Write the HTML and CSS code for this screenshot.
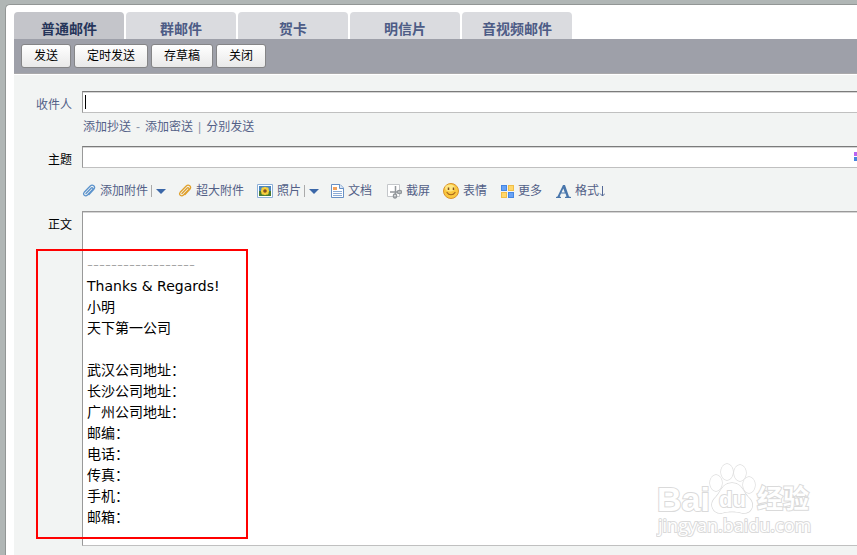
FILE: index.html
```html
<!DOCTYPE html>
<html lang="zh-CN">
<head>
<meta charset="utf-8">
<title>写信</title>
<link rel="stylesheet" href="styles.css">
</head>
<body>
<main class="window">
  <nav class="tabs">
    <a class="tab active" href="#">普通邮件</a>
    <a class="tab" href="#">群邮件</a>
    <a class="tab" href="#">贺卡</a>
    <a class="tab" href="#">明信片</a>
    <a class="tab" href="#">音视频邮件</a>
  </nav>
  <div class="actions">
    <button type="button">发送</button>
    <button type="button">定时发送</button>
    <button type="button">存草稿</button>
    <button type="button">关闭</button>
  </div>
  <form class="compose">
    <label class="label soft" for="to">收件人</label>
    <div class="field">
      <input id="to" type="text">
      <span class="caret"></span>
    </div>
    <div class="links">
      <a href="#">添加抄送</a><span class="sep">-</span><a href="#">添加密送</a><span class="sep">|</span><a href="#">分别发送</a>
    </div>
    <label class="label" for="subject">主题</label>
    <div class="field">
      <input id="subject" type="text">
      <span class="swatches"><i></i><i></i></span>
    </div>
    <div class="tools">
      <a class="tool attach" href="#"><svg width="14" height="14" viewBox="0 0 14 14" fill="none" stroke="#5c93cc" stroke-width="1.3" stroke-linecap="round"><path d="M4 9.5 9 4.2c1.2-1.2 2.6.1 1.5 1.4L5.5 11C3.4 13.1.2 10.7 2.2 8.3L8 2.2C10.7-.3 14 2.6 11.8 5.3L7 10.5"/></svg>添加附件</a>
      <button class="drop" type="button" aria-label="附件选项"></button>
      <a class="tool big" href="#"><svg width="14" height="14" viewBox="0 0 14 14" fill="none" stroke="#e0a02c" stroke-width="1.3" stroke-linecap="round"><path d="M4 9.5 9 4.2c1.2-1.2 2.6.1 1.5 1.4L5.5 11C3.4 13.1.2 10.7 2.2 8.3L8 2.2C10.7-.3 14 2.6 11.8 5.3L7 10.5"/></svg>超大附件</a>
      <a class="tool photo" href="#"><svg width="16" height="14" viewBox="0 0 16 14"><path fill="#fff" stroke="#8db0d8" d="M.5.5h15v13H.5z"/><path fill="#4b86bd" d="M2 2h12v5H2z"/><path fill="#477b35" d="M2 7h12v5H2z"/><g fill="#f5cf3c"><circle cx="8" cy="4.500" r="1.700"/><circle cx="8" cy="9.500" r="1.700"/><circle cx="5.500" cy="7" r="1.700"/><circle cx="10.500" cy="7" r="1.700"/><circle cx="6" cy="5" r="1.700"/><circle cx="10" cy="5" r="1.700"/><circle cx="6" cy="9" r="1.700"/><circle cx="10" cy="9" r="1.700"/></g><circle cx="8" cy="7" r="1.800" fill="#87501e"/></svg>照片</a>
      <button class="drop" type="button" aria-label="照片选项"></button>
      <a class="tool doc" href="#"><svg width="13" height="14" viewBox="0 0 13 14"><path fill="#fff" stroke="#6790c5" d="M.5.5H9L12.5 4v9.500H.5z"/><path fill="#dbe7f7" stroke="#6790c5" d="M8.500.5v4h4"/><path fill="#f3a25d" d="M2 3h4v3H2z"/><path stroke="#8babd5" d="M2 7.500h9M2 9.500h9M2 11.500h9"/></svg>文档</a>
      <a class="tool shot" href="#"><svg width="15" height="15" viewBox="0 0 15 15" fill="none"><path fill="#fff" stroke="#c4c7ca" d="M.5.5h12v12H.5z"/><g stroke="#92979b" stroke-width="1.5"><path d="M8.500 2v8M3 8h8"/><ellipse cx="8" cy="12" rx="1.500" ry="2"/><ellipse cx="12.500" cy="8" rx="2" ry="1.500"/></g></svg>截屏</a>
      <a class="tool face" href="#"><svg width="16" height="16" viewBox="0 0 16 16"><circle cx="8" cy="8" r="7.500" fill="#fac83e" stroke="#d9922c"/><ellipse cx="7" cy="5" rx="5" ry="3.500" fill="#ffe681"/><path stroke="#825020" stroke-width="1.5" d="M5.500 4.500V7M10.500 4.500V7"/><path fill="none" stroke="#a4621d" stroke-width="1.2" stroke-linecap="round" d="M4 9.500c2 3 6 3 8 0"/></svg>表情</a>
      <a class="tool more" href="#"><svg width="13" height="13" viewBox="0 0 13 13"><rect x=".5" y=".5" width="5" height="5" fill="#68a2f5" stroke="#4586e2"/><rect x="7.500" y=".5" width="5" height="5" fill="#ffd76a" stroke="#f0bd46"/><rect x=".5" y="7.500" width="5" height="5" fill="#ffd76a" stroke="#f0bd46"/><rect x="7.500" y="7.500" width="5" height="5" fill="#68a2f5" stroke="#4586e2"/></svg>更多</a>
      <a class="tool format" href="#"><svg width="15" height="13" viewBox="0 0 15 13"><path fill="#4976ab" fill-rule="evenodd" d="M7 0h2l4 11.500 2 .5v1H9v-1l1.500-.5-1-3H5l-1.300 3L5 12v1H0v-1l1.500-.5zM7.300 3.500 5.500 7.500h3.300z"/></svg><span>格式<svg width="6" height="11" viewBox="0 0 6 11" fill="none" stroke="#536896"><path d="M3.500 0v10M1 7.500l2.500 2.500L6 7.500"/></svg></span></a>
    </div>
    <div class="label" id="body-label">正文</div>
    <div class="editor" contenteditable="true" role="textbox" aria-multiline="true" aria-labelledby="body-label" spellcheck="false">
      <p class="rule">––––––––––––––––––</p>
      <p>Thanks &amp; Regards!</p>
      <p>小明</p>
      <p>天下第一公司</p>
      <p><br></p>
      <p>武汉公司地址：</p>
      <p>长沙公司地址：</p>
      <p>广州公司地址：</p>
      <p>邮编：</p>
      <p>电话：</p>
      <p>传真：</p>
      <p>手机：</p>
      <p>邮箱：</p>
    </div>
  </form>
  <div class="highlight"></div>
  <svg class="watermark" width="160" height="80" viewBox="0 0 160 80" fill="#fff" stroke="#dadada" stroke-width="2" paint-order="stroke">
    <text class="brand" x="1" y="49">Bai</text>
    <g stroke-width="1.3"><ellipse cx="60" cy="21" rx="6" ry="8"/><ellipse cx="71" cy="10" rx="6" ry="8"/><ellipse cx="84" cy="11" rx="6" ry="8"/><ellipse cx="93" cy="23" rx="6" ry="8"/><path d="M76 21c-10 0-11 9-16 14-8 7-3 17 6 16 7-2 13-2 20 0 10 1 14-9 6-16-5-5-6-14-16-14z"/></g>
    <text class="du" x="63" y="45">du</text>
    <text class="cn" x="101" y="46">经验</text>
    <text class="url" x="2" y="70">jingyan.baidu.com</text>
  </svg>
</main>
</body>
</html>
```
FILE: styles.css
```css
* { box-sizing: border-box; }
body {
  margin: 0;
  padding: 4px 0 0 5px;
  background: #b0b6b5;
  color: #000;
  font: 12px/16px "Liberation Sans", "Noto Sans CJK SC", sans-serif;
  overflow: hidden;
}
a { color: #536087; text-decoration: none; }
.window {
  position: relative;
  min-height: calc(100vh - 4px);
  padding: 7px 0 0 8px;
  border: 1px solid #929695;
  border-width: 1px 0 0 1px;
  border-radius: 5px 0 0 0;
  background: #fff;
}
.tabs { display: flex; gap: 2px; }
.tab {
  width: 110px;
  height: 27px;
  padding-top: 6px;
  border-radius: 4px 4px 0 0;
  background: #dadbdf;
  color: #4d5c86;
  font-size: 14px;
  line-height: 22px;
  font-weight: bold;
  text-align: center;
}
.tab.active { background: #c4c5ca; color: #26355a; }
.actions {
  display: flex;
  gap: 3px;
  padding: 5px 7px;
  border-bottom: 1px solid #aaa9ab;
  background: #9ea0a9;
}
.actions button {
  height: 24px;
  padding: 0 12px;
  border: 1px solid #858587;
  border-radius: 3px;
  background: linear-gradient(#fff, #e9e9e9);
  color: #000;
  font: inherit;
}
.compose {
  display: grid;
  grid-template-columns: 58px minmax(0, 1fr);
  column-gap: 10px;
  margin-top: 1px;
  padding: 16px 0 10px;
  background: #f2f4f3;
}
.label { padding-top: 6px; text-align: right; }
.soft { color: #536087; }
.field { position: relative; }
.field input {
  display: block;
  width: 100%;
  height: 22px;
  padding: 0 4px;
  border: 1px solid #999;
  border-width: 1px 0 1px 1px;
  border-color: #7b7b7b #999 #c0c0c0 #999;
  background: #fff;
  box-shadow: inset 0 1px #d5d5d5;
  font: inherit;
  outline: 0;
}
.caret { position: absolute; left: 3px; top: 4px; width: 1px; height: 14px; background: #000; }
.swatches { position: absolute; right: 0; top: 6px; display: grid; gap: 1px; }
.swatches i { width: 3px; height: 4px; background: #b965f1; }
.swatches i + i { background: #4584df; }
.links { grid-column: 2; display: flex; gap: 5px; margin: 6px 0 11px; padding-left: 1px; }
.sep { color: #8b93a8; }
.tools { grid-column: 2; display: flex; align-items: center; height: 16px; margin: 15px 0 12px; }
.tool { display: flex; align-items: center; gap: 4px; white-space: nowrap; }
.drop {
  width: 14px;
  height: 12px;
  margin: 0 13px 0 3px;
  padding: 0 0 0 4px;
  border: 0;
  border-left: 1px solid #aaa;
  background: none;
}
.drop::before { content: ""; display: block; border: 5px solid transparent; border-top-color: #3b67a8; border-bottom: 0; }
.photo, .face { margin-left: 13px; }
.shot { margin-left: 15px; }
.more, .format { margin-left: 14px; }
.format span { display: flex; align-items: center; }
.editor {
  min-height: 335px;
  padding: 43px 4px 17px;
  border: 1px solid #999;
  border-width: 1px 0 1px 1px;
  border-bottom-color: #c0c0c0;
  background: #fff;
  box-shadow: inset 0 1px #d5d5d5;
  font: 14px/21px "DejaVu Sans", "Noto Sans CJK SC", sans-serif;
  outline: 0;
}
.editor p { margin: 0; height: 21px; }
.editor .rule { color: #909090; font: 10px/21px "Liberation Mono", monospace; }
.highlight {
  position: absolute;
  left: 30px;
  top: 244px;
  width: 212px;
  height: 290px;
  border: 2px solid #f00;
  pointer-events: none;
}
.watermark { position: absolute; right: 41px; top: 457px; pointer-events: none; }
.brand { font: bold 34px "Liberation Sans", sans-serif; }
.du { font: bold 22px "Liberation Sans", sans-serif; }
.cn { font: bold 26px "Noto Sans CJK SC", sans-serif; }
.url { font: 18px "Open Sans", sans-serif; }
```
